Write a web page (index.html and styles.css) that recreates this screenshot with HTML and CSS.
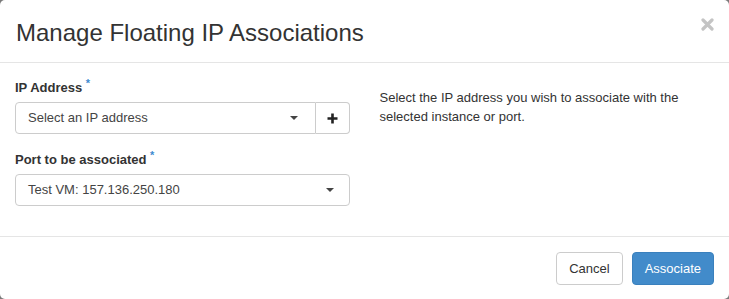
FILE: index.html
```html
<!DOCTYPE html>
<html>
<head>
<meta charset="utf-8">
<link rel="stylesheet" href="styles.css">
</head>
<body>
<div class="modal">
  <div class="modal-header">
    <h4 class="modal-title">Manage Floating IP Associations</h4>
    <button class="close" aria-label="Close">
      <svg width="13" height="13" viewBox="0 0 13 13"><path d="M2 2 L11 11 M11 2 L2 11" stroke="#c4c4c4" stroke-width="3.2" stroke-linecap="round"/></svg>
    </button>
  </div>
  <div class="modal-body">
    <div class="col left">
      <div class="form-group">
        <label class="label">IP Address <span class="req">*</span></label>
        <div class="input-group">
          <div class="select grow">
            <span>Select an IP address</span>
            <span class="caret"></span>
          </div>
          <div class="addon">
            <svg width="11" height="11" viewBox="0 0 11 11"><path d="M5.5 0.5 V10.5 M0.5 5.5 H10.5" stroke="#222" stroke-width="2.6"/></svg>
          </div>
        </div>
      </div>
      <div class="form-group">
        <label class="label">Port to be associated <span class="req">*</span></label>
        <div class="select single">
          <span>Test VM: 157.136.250.180</span>
          <span class="caret"></span>
        </div>
      </div>
    </div>
    <div class="col right">
      <p class="help">Select the IP address you wish to associate with the selected instance or port.</p>
    </div>
  </div>
  <div class="modal-footer">
    <button class="btn btn-default">Cancel</button>
    <button class="btn btn-primary">Associate</button>
  </div>
</div>
</body>
</html>
```
FILE: styles.css
```css
html, body {
  margin: 0;
  padding: 0;
  background: #7a7a7a;
}
body {
  font-family: "Liberation Sans", Arial, Helvetica, sans-serif;
  font-size: 13px;
  line-height: 1.42857;
  color: #333;
}
.modal {
  width: 729px;
  height: 299px;
  background: #fff;
  border-radius: 5px;
  overflow: hidden;
  box-sizing: border-box;
}
.modal-header {
  height: 63px;
  box-sizing: border-box;
  border-bottom: 1px solid #e5e5e5;
  padding: 20px 15px 0 16px;
  display: flex;
  justify-content: space-between;
  align-items: flex-start;
}
.modal-title {
  margin: 0;
  font-size: 24px;
  font-weight: normal;
  line-height: 26px;
  color: #333;
}
.close {
  background: none;
  border: 0;
  padding: 0;
  margin-top: -2px;
  margin-right: 0;
  width: 13px;
  height: 13px;
  cursor: pointer;
}
.close svg { display: block; }
.modal-body {
  display: flex;
  padding: 15px 0 15px 0;
}
.col {
  width: 364.5px;
  box-sizing: border-box;
  padding: 0 15px;
}
.form-group {
  margin-bottom: 16px;
}
.form-group:last-child { margin-bottom: 15px; }
.label {
  display: block;
  font-weight: bold;
  margin-bottom: 5px;
  height: 19px;
  line-height: 19px;
  color: #333;
}
.req {
  color: #3d8bd0;
  font-size: 11px;
  line-height: 0;
  position: relative;
  top: -5px;
}
.input-group {
  display: flex;
}
.select {
  height: 32px;
  box-sizing: border-box;
  border: 1px solid #ccc;
  border-radius: 4px;
  padding: 0 12px;
  display: flex;
  align-items: center;
  justify-content: space-between;
  color: #444;
  background: #fff;
}
.select.grow {
  flex: 1;
  border-radius: 4px 0 0 4px;
  padding-right: 17px;
}
.select.single {
  padding-right: 15px;
}
.caret {
  width: 0;
  height: 0;
  border-left: 4px solid transparent;
  border-right: 4px solid transparent;
  border-top: 4px solid #444;
}
.addon {
  width: 34px;
  height: 32px;
  box-sizing: border-box;
  border: 1px solid #ccc;
  border-left: 0;
  border-radius: 0 4px 4px 0;
  display: flex;
  align-items: center;
  justify-content: center;
  background: #fff;
}
.addon svg { display: block; }
.help {
  margin: 10px 0 0 0;
  line-height: 19px;
  color: #333;
}
.modal-footer {
  border-top: 1px solid #e5e5e5;
  padding: 15px;
  display: flex;
  justify-content: flex-end;
  gap: 9px;
}
.btn {
  font-family: "Liberation Sans", Arial, Helvetica, sans-serif;
  font-size: 13px;
  height: 33px;
  padding: 0 12px;
  border-radius: 4px;
  border: 1px solid #ccc;
  background: #fff;
  color: #333;
  line-height: 1;
  cursor: pointer;
}
.btn-primary {
  background: #428bca;
  border-color: #3a80bd;
  color: #fff;
}
```
